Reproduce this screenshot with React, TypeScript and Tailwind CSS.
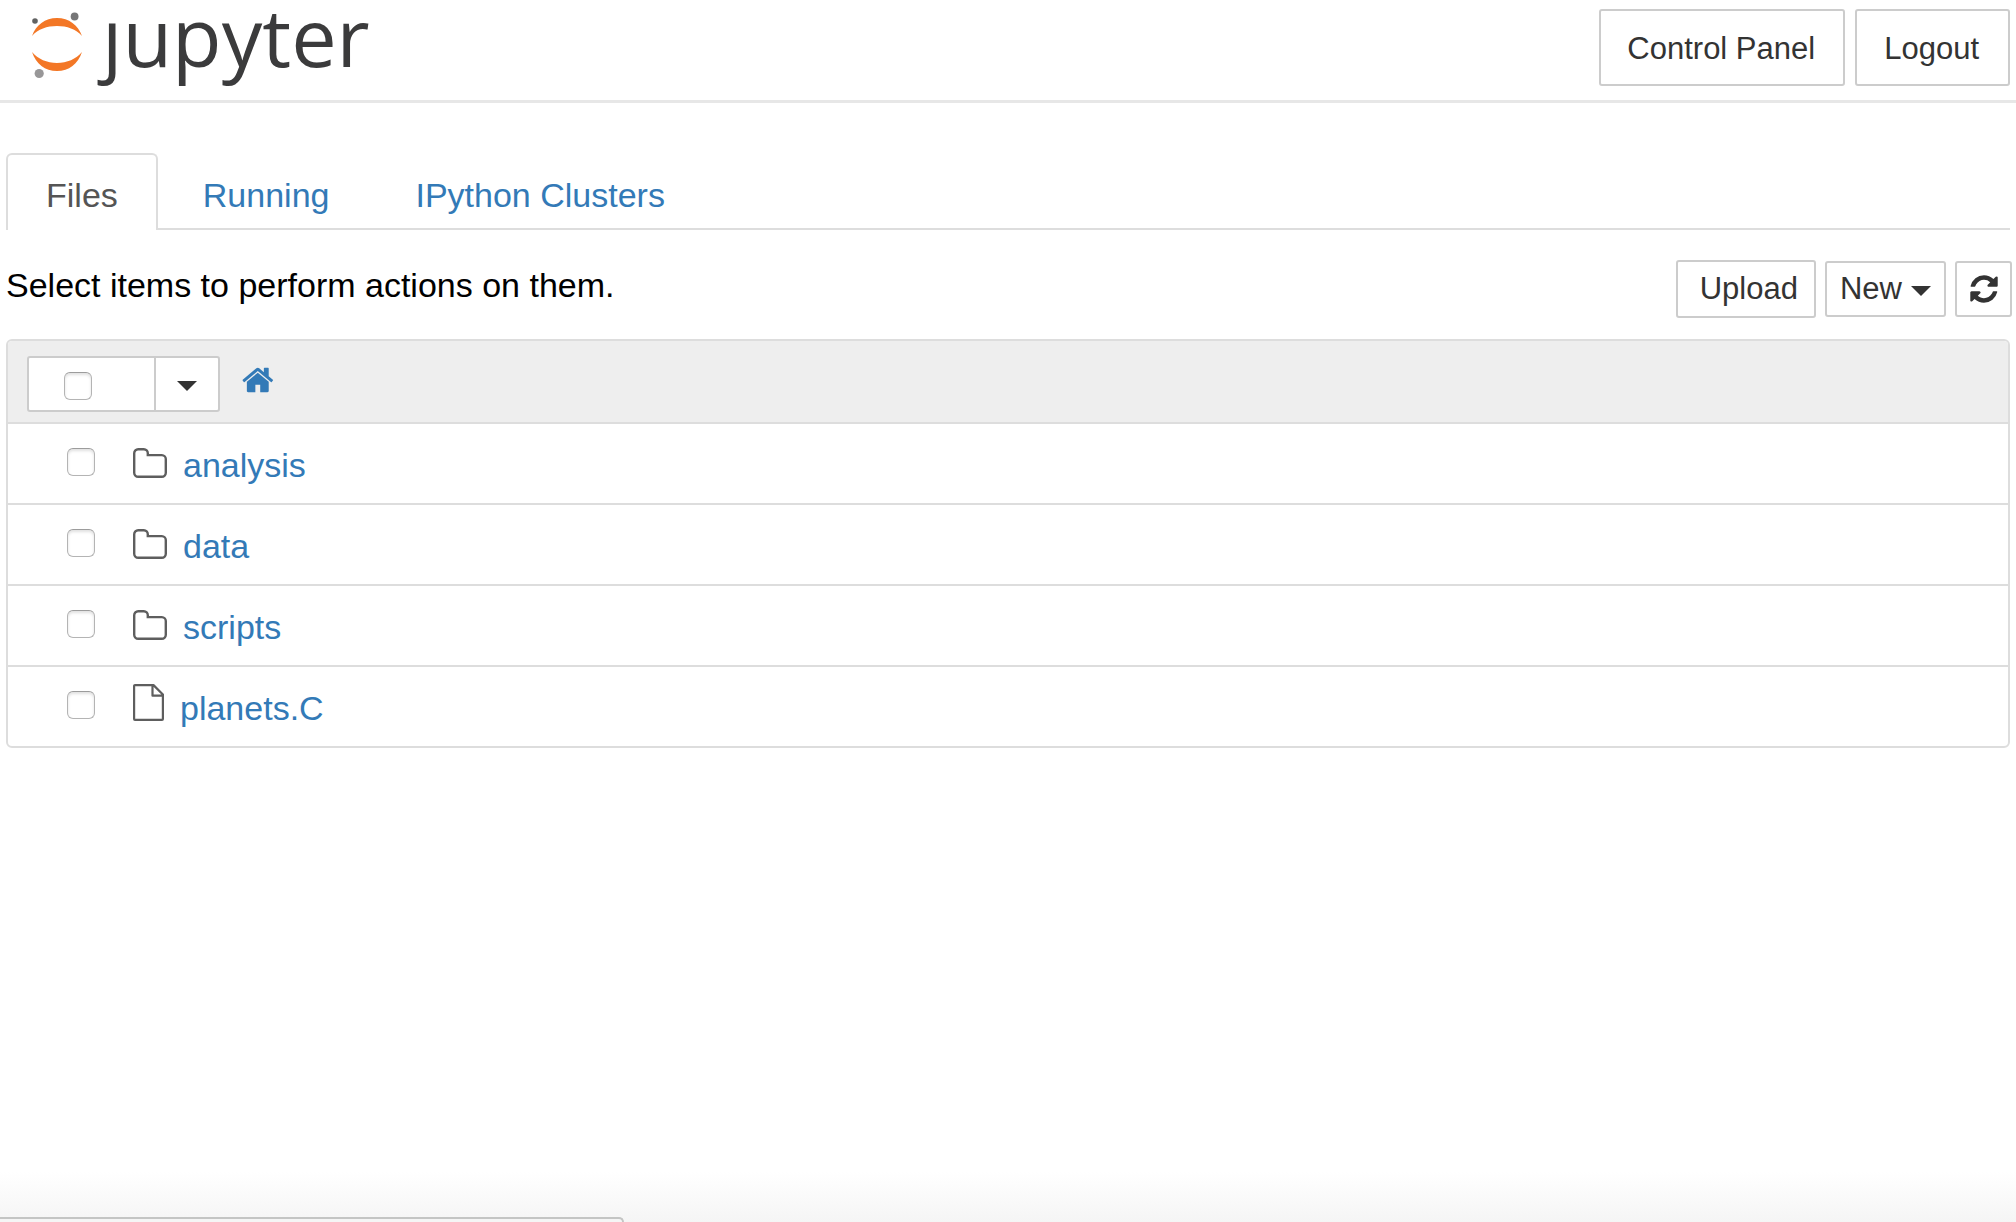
import React from "react";

const HOME =
  "M1408 992v480q0 26-19 45t-45 19h-384v-384h-256v384h-384q-26 0-45-19t-19-45v-480q0-1 .5-3t.5-3l575-474 575 474q1 2 1 6zm223-69l-62 74q-8 9-21 11h-3q-13 0-21-7l-692-577-692 577q-12 8-24 7-13-2-21-11l-62-74q-8-10-7-23.5t11-21.5l719-599q32-26 76-26t76 26l244 204v-195q0-14 9-23t23-9h192q14 0 23 9t9 23v408l219 182q10 8 11 21.5t-7 23.5z";
const REFRESH =
  "M1639 1056q0 5-1 7-64 268-268 434.5t-478 166.5q-146 0-282.5-55t-243.5-157l-129 129q-19 19-45 19t-45-19-19-45v-448q0-26 19-45t45-19h448q26 0 45 19t19 45-19 45l-137 137q71 66 161 102t187 36q134 0 250-65t186-179q11-17 53-117 8-23 30-23h192q13 0 22.5 9.5t9.5 22.5zm25-800v448q0 26-19 45t-45 19h-448q-26 0-45-19t-19-45 19-45l138-138q-148-137-349-137-134 0-250 65t-186 179q-11 17-53 117-8 23-30 23h-199q-13 0-22.5-9.5t-9.5-22.5v-7q65-268 270-434.5t480-166.5q146 0 284 55.5t245 156.5l130-129q19-19 45-19t45 19 19 45z";

const button =
  "flex items-center rounded-[3px] border-2 border-[#ccc] bg-white text-[31px] leading-9 text-[#333]";

function Caret() {
  return (
    <svg className="h-[10px] w-5" viewBox="0 0 20 10" fill="currentColor" aria-hidden="true">
      <path d="M0 0h20L10 10z" />
    </svg>
  );
}

function FolderIcon() {
  return (
    <svg className="h-[30px] w-[34px]" viewBox="0 0 34 30" fill="none" stroke="#5e5e5e" strokeWidth="2.4" aria-hidden="true">
      <path d="M1.2 5.2a4 4 0 0 1 4-4h5.600a4 4 0 0 1 4 4v1.900h14a4 4 0 0 1 4 4v13.700a4 4 0 0 1-4 4H5.200a4 4 0 0 1-4-4z" />
    </svg>
  );
}

function FileIcon() {
  return (
    <svg className="h-[37px] w-[31px]" viewBox="0 0 31 37" fill="none" stroke="#5e5e5e" strokeWidth="2.2" strokeLinejoin="round" aria-hidden="true">
      <path d="M2 1.100h18.500L29.900 10.500V35a.9.9 0 0 1-.9.9H2a.9.9 0 0 1-.9-.9V2a.9.9 0 0 1 .9-.9zM19.500 1.500v10.200h10.200" />
    </svg>
  );
}

function Checkbox({ label }: { label: string }) {
  return (
    <input
      type="checkbox"
      aria-label={label}
      className="block size-7 shrink-0 appearance-none rounded-md border border-[#b4b4b4] border-t-[#9c9c9c] bg-white shadow-[inset_0_2px_3px_rgba(0,0,0,0.12)]"
    />
  );
}

function Logo() {
  return (
    <a href="#" aria-label="jupyter" className="flex h-[100px] items-start pl-8">
      <svg className="mt-3 h-[68px] w-[50px]" viewBox="0 0 50 68" aria-hidden="true">
        <path fill="#f37726" d="M0 24C4 13 13 6 25 6s21 7 25 18C44 17 35 14 25 14S6 17 0 24zM0 40c6 7 15 11 25 11s19-4 25-11c-4 12-13 19-25 19S4 52 0 40z" />
        <circle cx="3" cy="9" r="2.800" fill="#616262" />
        <circle cx="42.600" cy="4.500" r="3.900" fill="#767677" />
        <circle cx="7.200" cy="61.500" r="4.600" fill="#989798" />
      </svg>
      <span className="ml-5 font-['Open_Sans',sans-serif] text-[81px] leading-[72px] font-medium text-[#3b3b3c]">ȷupyter</span>
    </a>
  );
}

const tabs = ["Files", "Running", "IPython Clusters"];

const entries = [
  { name: "analysis", folder: true },
  { name: "data", folder: true },
  { name: "scripts", folder: true },
  { name: "planets.C", folder: false },
];

export default function App() {
  return (
    <div className="relative flex min-h-screen flex-col bg-white font-['Liberation_Sans',Arial,sans-serif] text-[34px] leading-[48px] text-black">
      <header className="flex items-start justify-between border-b-3 border-[#e7e7e7] pr-[6px]">
        <Logo />
        <div className="flex gap-[10px] pt-[9px]">
          <button className={`${button} h-[77px] pr-7 pl-[26px] pt-[2px]`}>Control Panel</button>
          <button className={`${button} h-[77px] pr-[29px] pl-[27px] pt-[2px]`}>Logout</button>
        </div>
      </header>

      <main className="px-[6px] pt-[50px]">
        <nav className="flex gap-1 border-b-2 border-[#ddd]">
          {tabs.map((tab, i) => (
            <a
              key={tab}
              href="#"
              className={
                i === 0
                  ? "-mb-[2px] flex h-[77px] items-center rounded-t-md border-2 border-b-0 border-[#ddd] bg-white px-[38px] pt-1 text-[#555]"
                  : "flex h-[75px] items-center px-[41px] pt-2 text-[#337ab7]"
              }
            >
              {tab}
            </a>
          ))}
        </nav>

        <div className="flex items-start justify-between pt-[30px]">
          <p className="pt-px">Select items to perform actions on them.</p>
          <div className="-mr-[2px] flex items-center gap-[9px]">
            <button className={`${button} h-[58px] pr-4 pl-[22px]`}>Upload</button>
            <button className={`${button} h-14 gap-[9px] px-[13px]`}>
              New
              <span className="pt-[3px]">
                <Caret />
              </span>
            </button>
            <button aria-label="Refresh" className={`${button} h-14 w-[57px] justify-center`}>
              <svg className="size-8" viewBox="0 0 1792 1792" fill="currentColor" aria-hidden="true">
                <path d={REFRESH} />
              </svg>
            </button>
          </div>
        </div>

        <section className="mt-[21px] rounded-md border-2 border-[#ddd]">
          <div className="flex h-[83px] items-center rounded-t-sm border-b-2 border-[#ddd] bg-[#eee] pl-[19px]">
            <div className="mt-1 flex h-14 rounded-[3px] border-2 border-[#ccc] bg-white">
              <div className="flex w-[125px] items-center pt-1 pl-[35px]">
                <Checkbox label="Select all" />
              </div>
              <button aria-label="Selection menu" className="flex w-16 items-center justify-center border-l-2 border-[#ccc] pt-1 text-[#333]">
                <Caret />
              </button>
            </div>
            <a href="#" aria-label="Home" className="ml-[22px] pb-1 text-[#337ab7]">
              <svg className="size-[34px]" viewBox="0 0 1792 1792" fill="currentColor" aria-hidden="true">
                <path d={HOME} />
              </svg>
            </a>
          </div>
          <ul className="divide-y-2 divide-[#ddd]">
            {entries.map((e) => (
              <li key={e.name} className="flex h-[81px] items-center pl-[59px] last:h-[79px]">
                <div className="pb-1">
                  <Checkbox label={`Select ${e.name}`} />
                </div>
                <div className={e.folder ? "ml-[38px] pb-[2px]" : "ml-[38px] pb-2"}>
                  {e.folder ? <FolderIcon /> : <FileIcon />}
                </div>
                <a href="#" className="ml-4 pt-[2px] text-[#337ab7]">
                  {e.name}
                </a>
              </li>
            ))}
          </ul>
        </section>
      </main>

      <div className="mt-auto flex h-[50px] items-end bg-linear-to-b from-white to-[#f5f5f5]" aria-hidden="true">
        <div className="h-[5px] w-[624px] rounded-tr-md border-t-2 border-r-2 border-[#c4c5c4] bg-[#f5f5f5]" />
      </div>
    </div>
  );
}
